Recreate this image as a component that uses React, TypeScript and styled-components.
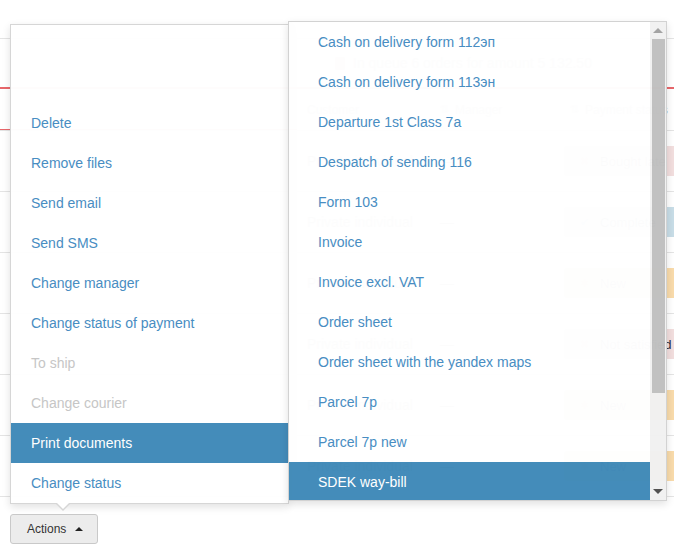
import { createGlobalStyle } from 'styled-components';
import styled from 'styled-components';

const BLUE_TEXT = '#468cc2';
const BLUE_ACTIVE = '#428bb9';
const MUTED = '#c6c6c6';
const LINE = '#e4e4e4';
const RED = '#e8676b';

const GlobalStyle = createGlobalStyle`
  html, body {
    margin: 0;
    padding: 0;
    background: #fff;
  }
  body {
    font-family: "Liberation Sans", Arial, sans-serif;
    font-size: 14px;
    color: #333;
  }
`;

const Root = styled.div`
  position: relative;
  width: 674px;
  height: 551px;
  overflow: hidden;
  background: #fff;
`;

/* ---------- page behind the menus ---------- */

const Page = styled.div`
  display: flex;
  flex-direction: column;
`;

const TopBar = styled.div`
  height: 38px;
  border-bottom: 1px solid ${LINE};
`;

const Info = styled.div`
  height: 48px;
  display: flex;
  align-items: center;
  gap: 8px;
  padding-left: 335px;
  color: #8a8a8a;
  font-size: 14px;
  white-space: nowrap;
`;

const InfoIcon = styled.span`
  width: 10px;
  height: 13px;
  border-radius: 2px;
  background: #e8a0a3;
`;

const Table = styled.div`
  border-top: 2px solid ${RED};
`;

const Grid = styled.div`
  display: grid;
  grid-template-columns: 297px 133px 130px 1fr;
  align-items: center;
  white-space: nowrap;
`;

const HeaderRow = styled(Grid)`
  height: 41px;
  border-bottom: 1px solid ${LINE};
  color: #999;
  font-size: 12px;
`;

const HeaderCell = styled.div<{ $accent?: boolean }>`
  height: 100%;
  display: flex;
  align-items: center;
  gap: 6px;
  padding-left: 10px;
  box-shadow: ${(p) => (p.$accent ? `inset 0 -1px ${RED}` : 'none')};
`;

const SortIcon = styled.span`
  color: #bbb;
  font-size: 11px;
`;

const Row = styled(Grid)`
  height: 60px;
  border-bottom: 1px solid ${LINE};
  color: #777;
`;

const Cell = styled.div`
  padding-left: 10px;
`;

const Badge = styled.div<{ $bg: string; $fg: string }>`
  margin-left: 4px;
  width: 140px;
  height: 30px;
  box-sizing: border-box;
  display: flex;
  align-items: center;
  gap: 10px;
  padding-left: 16px;
  border-radius: 4px;
  background: ${(p) => p.$bg};
  color: #2b2b3b;
  font-size: 13px;

  & > i {
    width: 10px;
    font-style: normal;
    color: ${(p) => p.$fg};
    font-size: 11px;
  }
`;

const Footer = styled.div`
  padding: 17px 10px 0;
`;

const ActionsButton = styled.button`
  display: inline-flex;
  align-items: center;
  gap: 9px;
  height: 30px;
  padding: 0 14px 0 16px;
  border: 1px solid #c9c9c9;
  border-radius: 3px;
  background: #ececec;
  color: #333;
  font-family: "Liberation Sans", Arial, sans-serif;
  font-size: 12px;
  cursor: pointer;
`;

const CaretUp = styled.span`
  width: 0;
  height: 0;
  border-left: 4px solid transparent;
  border-right: 4px solid transparent;
  border-bottom: 4px solid #222;
`;

/* ---------- dropdown menus ---------- */

const LeftMenu = styled.ul`
  position: absolute;
  left: 10px;
  top: 24px;
  width: 279px;
  box-sizing: border-box;
  margin: 0;
  padding: 78px 0 0;
  list-style: none;
  background: #fff;
  border: 1px solid #d6d6d6;
  box-shadow: 0 3px 8px rgba(0, 0, 0, 0.12);
  opacity: 0.985;

  &::before,
  &::after {
    content: '';
    position: absolute;
    left: 45px;
    width: 0;
    height: 0;
    border-left: 7px solid transparent;
    border-right: 7px solid transparent;
  }
  &::before {
    bottom: -8px;
    border-top: 7px solid #d6d6d6;
  }
  &::after {
    bottom: -6px;
    border-top: 7px solid #fff;
  }
`;

const MenuItem = styled.li<{ $active?: boolean; $disabled?: boolean; $pad: number }>`
  height: 40px;
  line-height: 40px;
  padding-left: ${(p) => p.$pad}px;
  white-space: nowrap;
  font-size: 14px;
  background: ${(p) => (p.$active ? BLUE_ACTIVE : 'transparent')};
  color: ${(p) => (p.$active ? '#fff' : p.$disabled ? MUTED : BLUE_TEXT)};
  cursor: ${(p) => (p.$disabled ? 'default' : 'pointer')};
`;

const RightMenu = styled.div`
  position: absolute;
  left: 288px;
  top: 21px;
  width: 379px;
  height: 480px;
  box-sizing: border-box;
  display: flex;
  background: #fff;
  border: 1px solid #d2d2d2;
  box-shadow: 0 3px 8px rgba(0, 0, 0, 0.12);
  opacity: 0.985;
`;

const ScrollList = styled.ul`
  flex: 1;
  margin: 0;
  padding: 0;
  list-style: none;
  overflow: hidden;
`;

const Scrollbar = styled.div`
  width: 16px;
  display: flex;
  flex-direction: column;
  background: #f1f1f1;
`;

const ScrollArrow = styled.div<{ $down?: boolean }>`
  height: 17px;
  display: flex;
  align-items: center;
  justify-content: center;

  &::after {
    content: '';
    width: 0;
    height: 0;
    border-left: 5px solid transparent;
    border-right: 5px solid transparent;
    ${(p) =>
      p.$down
        ? 'border-top: 5px solid #505050;'
        : 'border-bottom: 5px solid #a3a3a3;'}
  }
`;

const Thumb = styled.div`
  height: 354px;
  margin: 0 1px 0 2px;
  background: #c1c1c1;
`;

const Track = styled.div`
  flex: 1;
`;

const actions = [
  { label: 'Delete' },
  { label: 'Remove files' },
  { label: 'Send email' },
  { label: 'Send SMS' },
  { label: 'Change manager' },
  { label: 'Change status of payment' },
  { label: 'To ship', disabled: true },
  { label: 'Change courier', disabled: true },
  { label: 'Print documents', active: true },
  { label: 'Change status' },
];

const documents = [
  'Cash on delivery form 112эп',
  'Cash on delivery form 113эн',
  'Departure 1st Class 7а',
  'Despatch of sending 116',
  'Form 103',
  'Invoice',
  'Invoice excl. VAT',
  'Order sheet',
  'Order sheet with the yandex maps',
  'Parcel 7p',
  'Parcel 7p new',
  'SDEK way-bill',
];

const orders = [
  { status: 'Bought late', bg: '#f2dede', fg: '#e08a8c', icon: '✖' },
  { status: 'Complete', bg: '#c8dde7', fg: '#6aa6c8', icon: '✔' },
  { status: 'New', bg: '#f9dbab', fg: '#e6a85a', icon: '✱' },
  { status: 'Not satisfied', bg: '#f2dede', fg: '#e08a8c', icon: '✖' },
  { status: 'New', bg: '#f9dbab', fg: '#e6a85a', icon: '✱' },
  { status: 'New', bg: '#f9dbab', fg: '#e6a85a', icon: '✱' },
];

const App = () => {
  return (
    <Root>
      <GlobalStyle />
      <Page>
        <TopBar />
        <Info>
          <InfoIcon />
          In queue 6 orders for amount 5 132.50
        </Info>
        <Table>
          <HeaderRow>
            <HeaderCell $accent />
            <HeaderCell>Customer</HeaderCell>
            <HeaderCell>
              <SortIcon>⇅</SortIcon>Manager
            </HeaderCell>
            <HeaderCell>
              <SortIcon>⇅</SortIcon>Payment status
            </HeaderCell>
          </HeaderRow>
          {orders.map((o, i) => (
            <Row key={i}>
              <Cell />
              <Cell>Private individual</Cell>
              <Cell>—</Cell>
              <Badge $bg={o.bg} $fg={o.fg}>
                <i>{o.icon}</i>
                {o.status}
              </Badge>
            </Row>
          ))}
        </Table>
        <Footer>
          <ActionsButton type="button">
            Actions
            <CaretUp />
          </ActionsButton>
        </Footer>
      </Page>

      <LeftMenu>
        {actions.map((a) => (
          <MenuItem key={a.label} $pad={20} $active={a.active} $disabled={a.disabled}>
            {a.label}
          </MenuItem>
        ))}
      </LeftMenu>

      <RightMenu>
        <ScrollList>
          {documents.map((d) => (
            <MenuItem key={d} $pad={29} $active={d === 'SDEK way-bill'}>
              {d}
            </MenuItem>
          ))}
        </ScrollList>
        <Scrollbar>
          <ScrollArrow />
          <Thumb />
          <Track />
          <ScrollArrow $down />
        </Scrollbar>
      </RightMenu>
    </Root>
  );
};

export default App;
